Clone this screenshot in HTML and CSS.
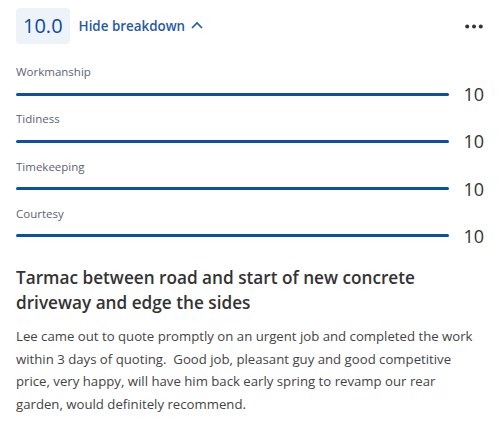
FILE: index.html
```html
<!DOCTYPE html>
<html>
<head>
<meta charset="utf-8">
<link rel="stylesheet" href="styles.css">
</head>
<body>
<div class="card">
  <div class="header">
    <div class="score">10.0</div>
    <div class="toggle">Hide breakdown
      <svg class="chevron" width="12" height="8" viewBox="0 0 12 8"><path d="M1 7 L6 2 L11 7" fill="none" stroke="#1f5aa6" stroke-width="1.6"/></svg>
    </div>
    <svg class="more" width="18" height="5" viewBox="0 0 18 5"><circle cx="2.2" cy="2.5" r="2"/><circle cx="9" cy="2.5" r="2"/><circle cx="15.8" cy="2.5" r="2"/></svg>
  </div>
  <div class="breakdown">
    <div class="row">
      <div class="label">Workmanship</div>
      <div class="barrow"><div class="bar"></div><div class="num">10</div></div>
    </div>
    <div class="row">
      <div class="label">Tidiness</div>
      <div class="barrow"><div class="bar"></div><div class="num">10</div></div>
    </div>
    <div class="row">
      <div class="label">Timekeeping</div>
      <div class="barrow"><div class="bar"></div><div class="num">10</div></div>
    </div>
    <div class="row">
      <div class="label">Courtesy</div>
      <div class="barrow"><div class="bar"></div><div class="num">10</div></div>
    </div>
  </div>
  <h2 class="title">Tarmac between road and start of new concrete driveway and edge the sides</h2>
  <p class="text">Lee came out to quote promptly on an urgent job and completed the work within 3 days of quoting.&nbsp; Good job, pleasant guy and good competitive price, very happy, will have him back early spring to revamp our rear garden, would definitely recommend.</p>
</div>
</body>
</html>
```
FILE: styles.css
```css
* { box-sizing: border-box; }
body {
  margin: 0;
  background: #fff;
  font-family: "Open Sans", sans-serif;
}
.card {
  padding: 8px 16px;
}
.header {
  display: flex;
  align-items: center;
  height: 36px;
}
.score {
  background: #eef3fa;
  border-radius: 4px;
  height: 36px;
  line-height: 36px;
  padding: 0 7px;
  font-size: 20px;
  color: #0b4b9a;
}
.toggle {
  margin-left: 9px;
  font-size: 13.4px;
  font-weight: 600;
  color: #1f5aa6;
  display: flex;
  align-items: center;
}
.chevron {
  margin-left: 6px;
  margin-top: -2px;
}
.more {
  margin-left: auto;
  margin-right: 1px;
  fill: #333;
}
.breakdown {
  margin-top: 20px;
}
.row {
  margin-bottom: 3.33px;
}
.label {
  font-size: 11.5px;
  line-height: 16px;
  color: #5c6472;
}
.barrow {
  display: flex;
  align-items: center;
  height: 28px;
}
.bar {
  flex: 1;
  height: 3px;
  background: #0c4fa3;
  border-radius: 2px;
}
.num {
  margin-left: 14px;
  font-size: 18px;
  line-height: 28px;
  color: #333;
  text-align: right;
  min-width: 21px;
}
.title {
  margin: 15.5px 0 0;
  font-size: 17.2px;
  line-height: 25px;
  font-weight: 600;
  color: #333;
}
.text {
  margin: 9.8px 0 0;
  font-size: 13.2px;
  line-height: 22.5px;
  color: #444;
}
```
